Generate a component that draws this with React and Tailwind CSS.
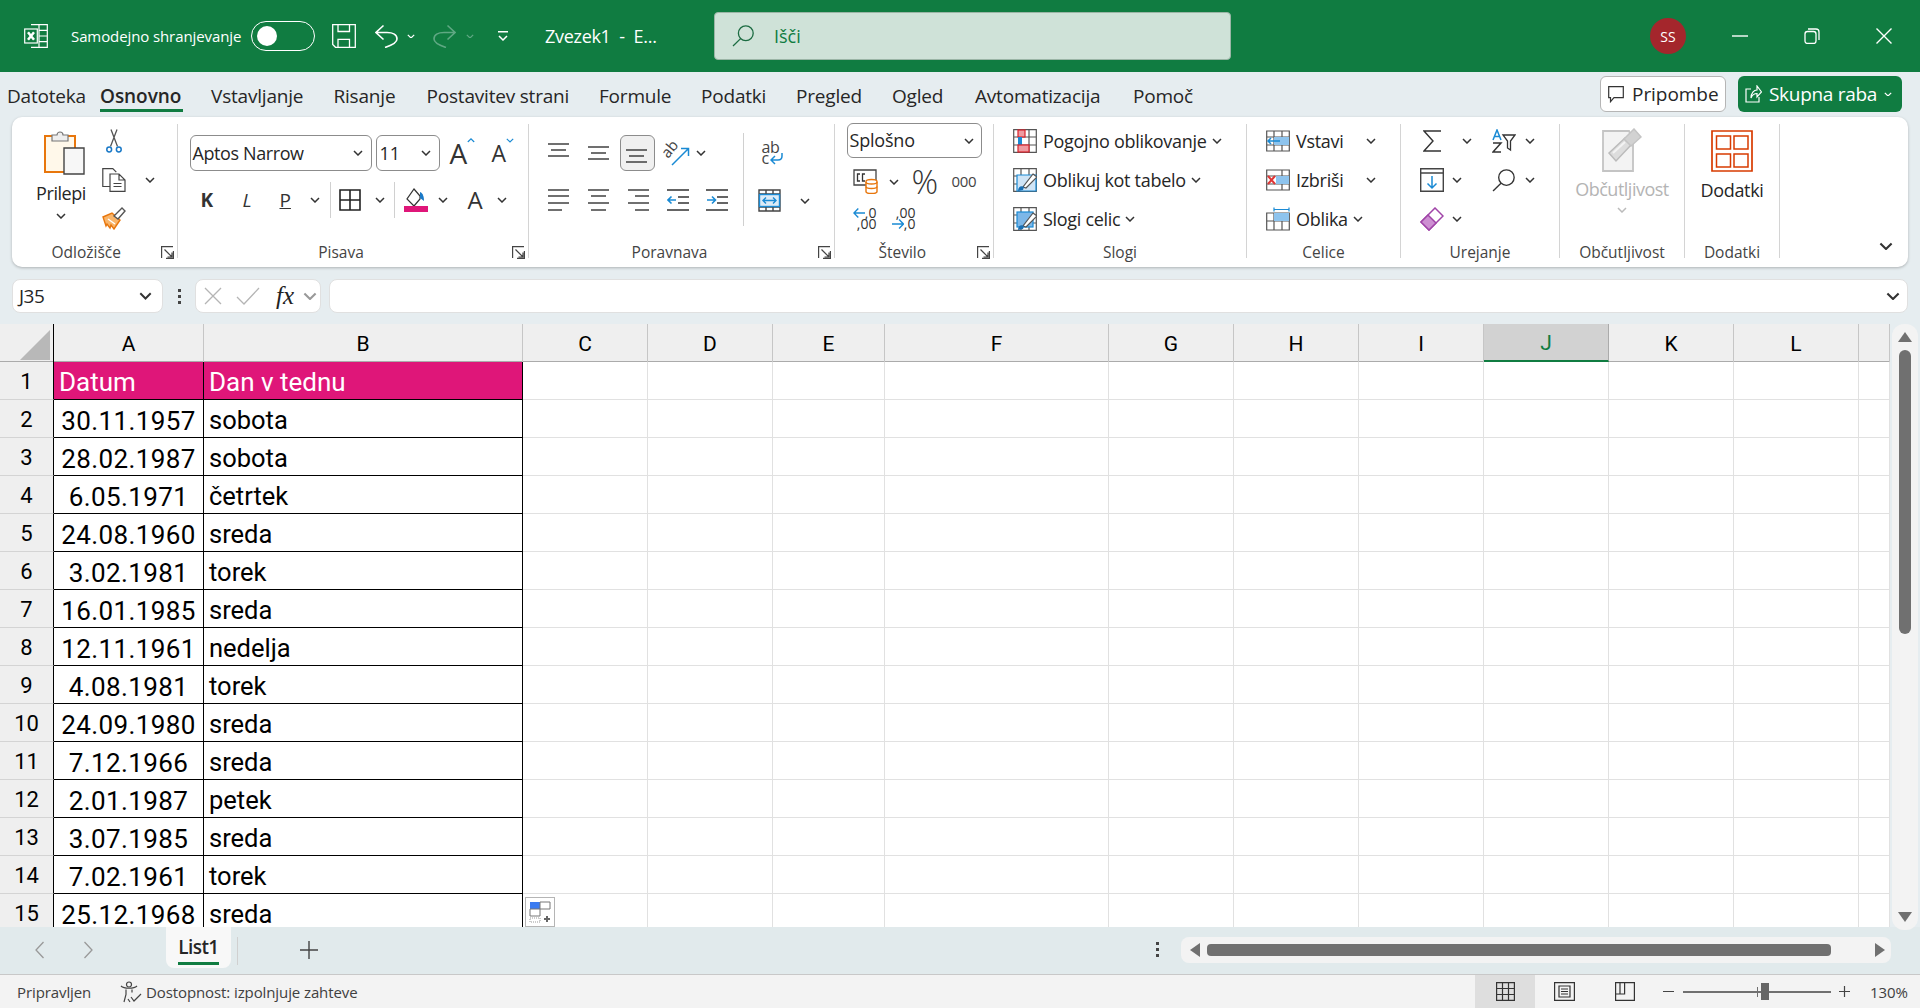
import React from "react";

const Chev = ({ className = "", color = "#333", w = 10 }) => (
  <svg viewBox="0 0 10 6" style={{ width: w }} className={`shrink-0 h-auto ${className}`} fill="none" stroke={color} strokeWidth="1.5">
    <path d="M1 1l4 4 4-4" />
  </svg>
);

const Launcher = () => (
  <svg viewBox="0 0 13 13" className="w-[13px] h-[13px]" fill="none" stroke="#444" strokeWidth="1.2">
    <path d="M.6 12V.6H12M12.4 5v7.4H5M3.5 3.5l7.5 7.5M11 6.5V11H6.5" />
  </svg>
);

const Sep = ({ className = "" }) => <div className={`w-px bg-[#d0d0d0] ${className}`} />;

const Group = ({ w, label, launcher, labelClass = "", children }) => (
  <div style={{ width: w }} className="h-[134px] flex flex-col shrink-0 border-r border-[#d4d4d4]">
    <div className="flex-1 min-h-0">{children}</div>
    <div className="h-[20px] -mb-[4px] flex items-center text-[15.5px] text-[#444] leading-[20px]">
      <span className={`flex-1 text-center ${labelClass}`}>{label}</span>
      {launcher && <span className="shrink-0 mr-[3px]"><Launcher /></span>}
    </div>
  </div>
);

// ---- title bar icons
const ExcelLogo = () => (
  <svg viewBox="0 0 24 24" className="w-6 h-6 shrink-0" fill="none" stroke="#fff" strokeWidth="1.2">
    <path d="M7 .7h16.3v22.6H7M15 .7v22.6M15 6.300h8.300M15 12h8.300M15 17.700h8.300" />
    <rect x=".7" y="5" width="12.6" height="14" fill="#107c41" />
    <path d="M4 8.200l6 7.600M10 8.200l-6 7.600" strokeWidth="2.500" />
  </svg>
);
const SaveIcon = () => (
  <svg viewBox="0 0 24 24" className="w-6 h-6" fill="none" stroke="#fff" strokeWidth="1.3">
    <path d="M.7.7h22.600v22.600H3.500L.7 20.500zM6 .7v6.800h11.500V.7M6 23.300v-8h11.500v8" />
  </svg>
);
const UndoIcon = () => (
  <svg viewBox="0 0 23 24" className="w-[23px] h-6" fill="none" stroke="#fff" strokeWidth="1.6">
    <path d="M1 8.500h11c6 0 10 2.500 10 6.500 0 3.500-6 6.500-12 8.500M8.500 1.500L1 8.500l7.500 7" />
  </svg>
);
const RedoIcon = () => (
  <svg viewBox="0 0 23 24" className="w-[23px] h-6" fill="none" stroke="#5fa883" strokeWidth="1.6">
    <path d="M22 8.500H11C5 8.500 1 11 1 15c0 3.500 6 6.500 12 8.500M14.500 1.500l7.500 7-7.500 7" />
  </svg>
);
const SearchGlass = ({ color = "#333", size = 22 }) => (
  <svg viewBox="0 0 22 22" style={{ width: size, height: size }} fill="none" stroke={color} strokeWidth="1.3">
    <circle cx="13.800" cy="8.200" r="7.400" />
    <path d="M8.600 13.600L1 21" />
  </svg>
);

// ---- clipboard
const PasteIcon = () => (
  <svg viewBox="0 0 41 45" className="w-[41px] h-[45px]" fill="none">
    <path d="M1 6h5v36H1z" fill="#fbd99a" />
    <path d="M1 6h30v36H1z" stroke="#e8760c" strokeWidth="2" fill="#fff8ea" />
    <path d="M8 5h5a3 3 0 0 1 6 0h5v6H8z" fill="#eee" stroke="#777" strokeWidth="1.200" />
    <path d="M20 18h20v26H20z" fill="#f7f7f7" stroke="#444" strokeWidth="1.400" />
  </svg>
);
const ScissorsIcon = () => (
  <svg viewBox="0 0 16 24" className="w-4 h-6" fill="none" strokeWidth="1.300">
    <path d="M4.500 17.500L11 .5M11.500 17.500L5 .5" stroke="#555" />
    <circle cx="3.200" cy="20.500" r="2.400" stroke="#1a79c7" strokeWidth="1.500" />
    <circle cx="12.800" cy="20.500" r="2.400" stroke="#1a79c7" strokeWidth="1.500" />
  </svg>
);
const CopyIcon = () => (
  <svg viewBox="0 0 24 24" className="w-6 h-6" fill="none" stroke="#444" strokeWidth="1.200">
    <path d="M8 18.500H.8V.7h10l3.500 3.500" />
    <path d="M8 6h9l6 6v11.300H8zM17 6v6h6M11.500 15.500h8M11.500 18.500h8" fill="#fff" />
  </svg>
);
const BrushIcon = () => (
  <svg viewBox="0 0 24 23" className="w-6 h-[23px]" fill="none" strokeWidth="1.400">
    <path d="M1 10l9-4 8 7-6 9-3-4-1 3-3-4-1 2z" fill="#f9b56a" stroke="#e8760c" />
    <path d="M6 12l7 5" stroke="#fff" />
    <path d="M12 9l8-8 3 3-7 8z" fill="#fff" stroke="#555" />
  </svg>
);

// ---- font
const BorderIcon = () => (
  <svg viewBox="0 0 22 22" className="w-[22px] h-[22px]" fill="none" stroke="#222" strokeWidth="1.600">
    <path d="M1 1h20v20H1zM11 1v20M1 11h20" />
  </svg>
);
const FillIcon = () => (
  <svg viewBox="0 0 24 24" className="w-6 h-6" fill="none">
    <path d="M9 1l6 7v3l-6 7-7-7z" stroke="#333" strokeWidth="1.200" transform="translate(1 0)" />
    <path d="M16 4c3 1 4 5 4 9l-4-3z" fill="#1a79c7" />
    <rect y="18" width="24" height="6" fill="#df1679" />
  </svg>
);
const Lines = ({ rows }) => (
  <svg viewBox="0 0 22 22" className="w-[22px] h-[22px]" fill="none" stroke="#333" strokeWidth="1.400">
    {rows.map((d, i) => <path key={i} d={d} />)}
  </svg>
);
const IndentIcon = ({ inc }) => (
  <svg viewBox="0 0 22 22" className="w-[22px] h-[22px]" fill="none" strokeWidth="1.400">
    <path d="M0 1h22M11 8h11M11 14h11M0 21h22" stroke="#333" />
    <path d={inc ? "M1 11h8M6 7.500l3.500 3.500L6 14.500" : "M9 11H1M4.500 7.500L1 11l3.500 3.500"} stroke="#1a8ad4" strokeWidth="1.600" />
  </svg>
);
const OrientIcon = () => (
  <svg viewBox="0 0 24 24" className="w-6 h-6 overflow-visible font-['Open_Sans',sans-serif]" fill="none">
    <path d="M8 24L24 8M17 7.500h7.500V15" stroke="#1a8ad4" strokeWidth="1.500" />
    <text x="4" y="18" transform="rotate(-50 4 18)" fontSize="15" fill="#444">ab</text>
  </svg>
);
const WrapArrow = () => (
  <svg viewBox="0 0 13 12" className="w-[13px] h-[12px] ml-[1px]" fill="none" stroke="#1a8ad4" strokeWidth="1.500">
    <path d="M12 0v3c0 3-2 4-4 4H1M5 3L1 7l4 4" />
  </svg>
);
const MergeIcon = () => (
  <svg viewBox="0 0 23 23" className="w-[23px] h-[23px]" fill="none" strokeWidth="1.400">
    <path d="M1 1h21v21H1zM1 5h21M1 18h21M8 1v4M15 1v4M8 18v4M15 18v4" stroke="#444" />
    <rect x="1.500" y="5.500" width="20" height="12" fill="#dcebf7" stroke="#1a8ad4" />
    <path d="M5 11.500h13M8 8.500l-3 3 3 3M15 8.500l3 3-3 3" stroke="#1a8ad4" />
  </svg>
);

// ---- number
const AccountIcon = () => (
  <svg viewBox="0 0 25 25" className="w-[25px] h-[25px]" fill="none">
    <path d="M1 1h22v15H1z" stroke="#444" strokeWidth="1.300" />
    <path d="M7 5H4.500v7H7M12 5H9.500v7H12" stroke="#333" strokeWidth="1.300" />
    <path d="M13 12.500a5.500 2 0 0 1 11 0v10a5.500 2 0 0 1-11 0z" fill="#fff" stroke="#e8760c" strokeWidth="1.400" />
    <path d="M13 13a5.500 2 0 0 0 11 0M13 17.500a5.500 2 0 0 0 11 0" stroke="#e8760c" strokeWidth="1.300" />
  </svg>
);
const DecArrow = ({ right }) => (
  <svg viewBox="0 0 14 12" className="w-[14px] h-[12px]" fill="none" stroke="#1a8ad4" strokeWidth="1.600">
    <path d={right ? "M0 6h13M8 1l5 5-5 5" : "M14 6H1M6 1L1 6l5 5"} />
  </svg>
);

// ---- styles and cells
const StyleGrid = ({ children }) => (
  <svg viewBox="0 0 24 24" className="w-6 h-6 shrink-0" fill="none" strokeWidth="1.200">
    <path d="M.7.7h22.600v22.600H.7zM8 .7v22.600M16 .7v22.600M.7 8h22.600M.7 16h22.600" stroke="#555" />
    {children}
  </svg>
);
const CondIcon = () => (
  <StyleGrid>
    <rect x="5" y="1" width="7" height="7" fill="#ee9ba1" stroke="#d9232e" />
    <rect x="5" y="8" width="4" height="8" fill="#1a8ad4" />
    <rect x="5" y="16" width="11" height="7" fill="#ee9ba1" stroke="#d9232e" />
  </StyleGrid>
);
const TableIcon = () => (
  <StyleGrid>
    <path d="M4 7h19v16H4z" fill="#cfe4f6" stroke="#1a8ad4" />
    <path d="M20 6l4 3-11 11-3-1z" fill="#fff" stroke="#555" />
    <path d="M5 23c0-4 3-6 6-4l-1 3z" fill="#1a6fb3" />
  </StyleGrid>
);
const CellStyleIcon = () => (
  <StyleGrid>
    <rect x="4" y="5" width="16" height="15" fill="#7db7e8" stroke="#1a8ad4" />
    <path d="M20 6l4 3-11 11-3-1z" fill="#fff" stroke="#555" />
    <path d="M5 23c0-4 3-6 6-4l-1 3z" fill="#1a6fb3" />
  </StyleGrid>
);
const InsertIcon = () => (
  <svg viewBox="0 0 24 24" className="w-6 h-6 shrink-0" fill="none" strokeWidth="1.200">
    <path d="M.7 2h22.600v20H.7zM.7 8h22.600M.7 16h22.600M8 2v20M16 2v20" stroke="#555" />
    <rect x="8" y="8" width="15" height="8" fill="#8ec4ee" />
    <path d="M14 12H2M5 9l-3 3 3 3" stroke="#1a8ad4" strokeWidth="1.500" />
  </svg>
);
const DeleteIcon = () => (
  <svg viewBox="0 0 24 24" className="w-6 h-6 shrink-0" fill="none" strokeWidth="1.200">
    <path d="M.7 2h22.600v20H.7zM.7 8h22.600M.7 16h22.600M16 2v20" stroke="#555" />
    <rect x="10" y="8" width="13" height="8" fill="#8ec4ee" />
    <path d="M2 8l7 8M9 8l-7 8" stroke="#e03636" strokeWidth="2" />
  </svg>
);
const FormatIcon = () => (
  <svg viewBox="0 0 24 24" className="w-6 h-6 shrink-0" fill="none" strokeWidth="1.200">
    <path d="M.7 6h22.600v17H.7zM8 6v17M16 6v17M.7 14h22.600" stroke="#555" />
    <rect x="8" y="6" width="15" height="8" fill="#8ec4ee" />
    <path d="M8 2.500h15M8 .5v4M23 .5v4" stroke="#1a8ad4" />
  </svg>
);

// ---- editing
const SigmaIcon = () => (
  <svg viewBox="0 0 18 22" className="w-[18px] h-[22px]" fill="none" stroke="#333" strokeWidth="1.400">
    <path d="M18 1H1l9 10-9 10h17" />
  </svg>
);
const SortIcon = () => (
  <svg viewBox="0 0 24 24" className="w-6 h-6" fill="none" strokeWidth="1.500">
    <path d="M1 11L5 1l4 10M2.500 7.500h5" stroke="#1a8ad4" />
    <path d="M1 14h8l-8 9h8" stroke="#333" />
    <path d="M11 6h12l-4.500 6v9l-3-2v-7z" stroke="#333" strokeWidth="1.300" />
  </svg>
);
const DownFillIcon = () => (
  <svg viewBox="0 0 24 24" className="w-6 h-6" fill="none" strokeWidth="1.400">
    <path d="M.7.7h22.600v22.600H.7zM.7 5h22.600" stroke="#444" />
    <path d="M12 8v12M7.500 15.500L12 20l4.500-4.500" stroke="#1a8ad4" strokeWidth="1.500" />
  </svg>
);
const EraserIcon = () => (
  <svg viewBox="0 0 24 24" className="w-6 h-6" fill="none" strokeWidth="1.500">
    <path d="M1 15L15 1l8 8L9 23z" stroke="#a044a8" fill="#fff" />
    <path d="M1 15l7-7 8 8-7 7z" fill="#cd8fd2" stroke="#a044a8" />
  </svg>
);
const SensitivityIcon = () => (
  <svg viewBox="0 0 40 44" className="w-10 h-11" fill="none">
    <path d="M1 3h26l4 10v30H1z" fill="#f3f3f3" stroke="#c4c4c4" strokeWidth="1.800" />
    <path d="M7 25L23 10l6 7-15 16z" fill="#ddd" stroke="#bbb" strokeWidth="1.500" />
    <path d="M11 25l12-11" stroke="#f3f3f3" strokeWidth="2" />
    <path d="M22 11l10-10 7 8-10 9z" fill="#d2d2d2" stroke="#c4c4c4" strokeWidth="1.500" />
  </svg>
);
const AddinsIcon = () => (
  <svg viewBox="0 0 42 42" className="w-[42px] h-[42px]" fill="none" stroke="#d83b01" strokeWidth="1.500">
    <path d="M1 1h40v40H1z" strokeWidth="1.700" />
    <path d="M5.500 6h14v13h-14zM23 6h14v13H23zM5.500 24h14v13h-14zM23 24h14v13H23z" />
  </svg>
);

const ALIGN_TOP = ["M0 2h21", "M3 8h15", "M0 14h21"];
const ALIGN_MID = ["M0 5h21", "M3 11h15", "M0 17h21"];
const ALIGN_LEFT = ["M0 1h21", "M0 7h21", "M0 14h21", "M0 21h14"];
const ALIGN_CENTER = ["M0 1h21", "M3 7h15", "M0 14h21", "M3 21h15"];
const ALIGN_RIGHT = ["M0 1h21", "M7 7h14", "M0 14h21", "M7 21h14"];

const TextRow = ({ icon, label, children, className = "" }) => (
  <div className={`h-6 flex items-center ${className}`}>
    {icon}
    <span className="ml-[6px] text-[18px] text-[#262626] tracking-[-0.3px] whitespace-nowrap">{label}</span>
    {children}
  </div>
);

const Ribbon = () => (
  <div className="mx-[12px] h-[150px] bg-white rounded-[10px] shadow-[0_1px_3px_rgba(0,0,0,0.25)] pt-[7px] flex text-[#262626] shrink-0">
    <Group w={165.5} label="Odložišče" launcher>
      <div className="flex">
        <div className="w-[82px] ml-[8px] flex flex-col items-center pt-[6px]">
          <div className="ml-[6px]"><PasteIcon /></div>
          <div className="mt-[6px] h-6 text-[18px] leading-6 tracking-[-0.45px]">Prilepi</div>
          <Chev className="mt-[8px]" />
        </div>
        <div className="w-[60px] pt-[5px]">
          <div className="w-6 h-6 flex justify-center"><ScissorsIcon /></div>
          <div className="mt-[15px] flex items-center"><CopyIcon /><Chev className="ml-[19px]" /></div>
          <div className="mt-[15px]"><BrushIcon /></div>
        </div>
      </div>
    </Group>

    <Group w={351} label="Pisava" launcher labelClass="pr-[7px]">
      <div className="pl-[12px] pt-[11px] flex h-[47px]">
        <div className="w-[182px] h-9 rounded-[6px] border border-[#8c8c8c] flex items-center justify-between pl-[2px] pr-[8px] text-[18px] tracking-[-0.4px]">
          Aptos Narrow<Chev />
        </div>
        <div className="w-[64px] ml-[4px] h-9 rounded-[6px] border border-[#8c8c8c] flex items-center justify-between pl-[3px] pr-[8px] text-[18px]">
          11<Chev />
        </div>
        <div className="ml-[10px] w-[24px] h-9 text-[28px] leading-9 text-[#333] relative">A
          <span className="absolute left-[17px] top-[3px]"><Chev color="#1a8ad4" w={8} className="rotate-180" /></span>
        </div>
        <div className="ml-[18px] w-[20px] h-9 text-[23px] leading-9 text-[#333] relative">A
          <span className="absolute left-[14px] top-[3px]"><Chev color="#1a8ad4" w={8} /></span>
        </div>
      </div>
      <div className="mt-[18px] pl-[23px] flex items-center h-[22px]">
        <span className="w-[13px] text-[19px] font-bold text-[#333]">K</span>
        <span className="ml-[29px] w-[9px] text-[19px] italic text-[#333]">L</span>
        <span className="ml-[28px] w-[13px] text-[19px] text-[#333] underline">P</span>
        <Chev className="ml-[17px]" />
        <Sep className="ml-[10px] h-[36px]" />
        <div className="ml-[8px]"><BorderIcon /></div>
        <Chev className="ml-[14px]" />
        <Sep className="ml-[9px] h-[36px]" />
        <div className="ml-[9px]"><FillIcon /></div>
        <Chev className="ml-[10px]" />
        <span className="ml-[20px] w-[15px] text-[24px] text-[#333] leading-[22px]">A</span>
        <Chev className="ml-[14px]" />
      </div>
    </Group>

    <Group w={306} label="Poravnava" launcher labelClass="pr-[7px]">
      <div className="flex">
        <div className="w-[214px] pl-[19px] pt-[11px]">
          <div className="flex items-center h-9">
            <Lines rows={ALIGN_TOP} />
            <div className="ml-[18px]"><Lines rows={ALIGN_MID} /></div>
            <div className="ml-[10px] w-[35px] h-9 rounded-[6px] border border-[#8c8c8c] bg-[#f0f0f0] flex items-center justify-center">
              <Lines rows={["M0 8h21", "M3 14h15", "M0 20h21"]} />
            </div>
            <div className="ml-[9px]"><OrientIcon /></div>
            <Chev className="ml-[8px]" />
          </div>
          <div className="flex items-center mt-[18px] h-[22px]">
            <Lines rows={ALIGN_LEFT} />
            <div className="ml-[18px]"><Lines rows={ALIGN_CENTER} /></div>
            <div className="ml-[18px]"><Lines rows={ALIGN_RIGHT} /></div>
            <div className="ml-[17px]"><IndentIcon /></div>
            <div className="ml-[17px]"><IndentIcon inc /></div>
          </div>
        </div>
        <Sep className="h-[93px] mt-[9px]" />
        <div className="pl-[14px] pt-[18px]">
          <div className="h-[24px] ml-[4px] text-[16px] text-[#444] tracking-[-0.3px]">
            <div className="h-[11px] leading-[11px]">ab</div>
            <div className="h-[11px] leading-[11px] flex items-center">c<WrapArrow /></div>
          </div>
          <div className="mt-[23px] flex items-center"><MergeIcon /><Chev className="ml-[19px]" /></div>
        </div>
      </div>
    </Group>

    <Group w={159.5} label="Število" launcher labelClass="pr-[7px]">
      <div className="pl-[12px]">
        <div className="w-[135px] h-[35px] -mt-[1px] rounded-[6px] border border-[#8c8c8c] flex items-center justify-between pl-[2px] pr-[7px] text-[18px] tracking-[-0.2px]">
          Splošno<Chev />
        </div>
        <div className="flex items-center mt-[11px] ml-[6px] h-[25px]">
          <AccountIcon />
          <Chev className="ml-[11px]" />
          <span className="ml-[13px] w-[26px] text-[33px] text-[#333] leading-[25px] font-light">%</span>
          <span className="ml-[14px] text-[15px] text-[#444] tracking-[-0.3px]">000</span>
        </div>
        <div className="flex mt-[13px] ml-[6px] text-[14px] leading-[11px] text-[#333]">
          <div className="w-[24px]">
            <div className="flex items-center h-[11px]"><DecArrow /><span>,0</span></div>
            <div className="h-[11px] text-right">,00</div>
          </div>
          <div className="w-[24px] ml-[15px]">
            <div className="h-[11px] text-right">,00</div>
            <div className="flex items-center h-[11px]"><DecArrow right /><span>,0</span></div>
          </div>
        </div>
      </div>
    </Group>

    <Group w={253} label="Slogi">
      <div className="pl-[19px] pt-[5px]">
        <TextRow icon={<CondIcon />} label="Pogojno oblikovanje"><Chev className="ml-[5px]" /></TextRow>
        <TextRow className="mt-[15px]" icon={<TableIcon />} label="Oblikuj kot tabelo"><Chev className="ml-[5px]" /></TextRow>
        <TextRow className="mt-[15px]" icon={<CellStyleIcon />} label="Slogi celic"><Chev className="ml-[5px]" /></TextRow>
      </div>
    </Group>

    <Group w={154} label="Celice">
      <div className="pl-[19px] pt-[5px]">
        <TextRow icon={<InsertIcon />} label="Vstavi"><Chev className="ml-auto mr-[24px]" /></TextRow>
        <TextRow className="mt-[15px]" icon={<DeleteIcon />} label="Izbriši"><Chev className="ml-auto mr-[24px]" /></TextRow>
        <TextRow className="mt-[15px]" icon={<FormatIcon />} label="Oblika"><Chev className="ml-[5px]" /></TextRow>
      </div>
    </Group>

    <Group w={159} label="Urejanje">
      <div className="pl-[19px] pt-[5px] grid grid-cols-[72px_60px] gap-y-[15px]">
        <div className="h-6 flex items-center"><div className="ml-[3px]"><SigmaIcon /></div><Chev className="ml-[21px]" /></div>
        <div className="h-6 flex items-center"><SortIcon /><Chev className="ml-[9px]" /></div>
        <div className="h-6 flex items-center"><DownFillIcon /><Chev className="ml-[8px]" /></div>
        <div className="h-6 flex items-center"><SearchGlass size={23} /><Chev className="ml-[10px]" /></div>
        <div className="h-6 flex items-center"><EraserIcon /><Chev className="ml-[8px]" /></div>
      </div>
    </Group>

    <Group w={125} label="Občutljivost">
      <div className="flex flex-col items-center pt-[4px]">
        <SensitivityIcon />
        <div className="mt-[5px] h-6 text-[18px] leading-6 tracking-[-0.5px] text-[#b4b4b4]">Občutljivost</div>
        <Chev className="mt-[6px]" color="#bbb" />
      </div>
    </Group>

    <Group w={95} label="Dodatki">
      <div className="flex flex-col items-center pt-[6px]">
        <AddinsIcon />
        <div className="mt-[6px] h-6 text-[18px] leading-6 tracking-[-0.3px]">Dodatki</div>
      </div>
    </Group>

    <div className="flex-1 flex justify-end items-end pr-[15px] pb-[8px] h-[134px]">
      <Chev w={14} color="#333" />
    </div>
  </div>
);

const TitleBar = () => (
  <div className="h-[72px] bg-[#107c41] flex items-center text-white shrink-0">
    <div className="ml-[24px]"><ExcelLogo /></div>
    <span className="ml-[23px] w-[180px] text-[15px] tracking-[-0.1px] whitespace-nowrap">Samodejno shranjevanje</span>
    <div className="w-[64px] h-[30px] rounded-full border-[1.5px] border-white flex items-center pl-[5px]">
      <div className="w-[20px] h-[20px] rounded-full bg-white" />
    </div>
    <div className="ml-[17px]"><SaveIcon /></div>
    <div className="ml-[19px]"><UndoIcon /></div>
    <Chev className="ml-[9px]" color="#fff" w={8} />
    <div className="ml-[18px]"><RedoIcon /></div>
    <Chev className="ml-[10px]" color="#5fa883" w={8} />
    <svg viewBox="0 0 10 10" className="ml-[24px] w-[10px] h-[10px]" fill="none" stroke="#fff" strokeWidth="1.500">
      <path d="M0 .8h10M1 5l4 4 4-4" />
    </svg>
    <span className="ml-[37px] w-[169px] text-[18px] tracking-[-0.3px] whitespace-pre">Zvezek1  -  E...</span>
    <div className="w-[517px] h-[48px] rounded-[4px] border border-[#9bb5a6] bg-[#cfe2d8] flex items-center pl-[17px] text-[#107c41]">
      <SearchGlass color="#1b6b41" />
      <span className="ml-[20px] text-[18px]">Išči</span>
    </div>
    <div className="ml-[419px] w-[36px] h-[36px] rounded-full bg-[#a4262c] flex items-center justify-center text-[14px]">SS</div>
    <svg viewBox="0 0 16 2" className="ml-[46px] w-[16px] h-[2px]"><path d="M0 1h16" stroke="#fff" strokeWidth="1.400" /></svg>
    <svg viewBox="0 0 16 16" className="ml-[56px] w-[16px] h-[16px]" fill="none" stroke="#fff" strokeWidth="1.300">
      <rect x="1" y="3.500" width="11" height="12" rx="2.500" />
      <path d="M4 1h8a3 3 0 0 1 3 3v8" />
    </svg>
    <svg viewBox="0 0 16 16" className="ml-[56px] w-[16px] h-[16px]" fill="none" stroke="#fff" strokeWidth="1.400">
      <path d="M.5.5l15 15M15.500.5l-15 15" />
    </svg>
  </div>
);

const TABS = [
  ["Datoteka", "w-[93px]"],
  ["Osnovno", "w-[111px]"],
  ["Vstavljanje", "w-[122.5px]"],
  ["Risanje", "w-[93px]"],
  ["Postavitev strani", "w-[172.5px]"],
  ["Formule", "w-[102px]"],
  ["Podatki", "w-[95px]"],
  ["Pregled", "w-[96px]"],
  ["Ogled", "w-[83px]"],
  ["Avtomatizacija", "w-[158px]"],
  ["Pomoč", "w-[60px]"],
];

const TabRow = () => (
  <div className="h-[45px] pl-[7px] pt-[4px] flex text-[#262626] shrink-0">
    {TABS.map(([t, w]) => (
      <div key={t} className={`${w} h-[36px]`}>
        {t === "Osnovno" ? (
          <span className="inline-block h-[36px] pt-[7px] w-[83px] leading-[26px] text-[19px] tracking-[-0.05px] font-semibold border-b-[3px] border-[#107c41] whitespace-nowrap">{t}</span>
        ) : (
          <span className="inline-block h-[36px] pt-[7px] leading-[26px] text-[19px] tracking-[-0.2px] whitespace-nowrap">{t}</span>
        )}
      </div>
    ))}
    <div className="ml-auto flex">
      <div className="w-[126px] h-[36px] rounded-[6px] bg-white border border-[#b5b5b5] flex items-center pl-[7px] text-[19px] tracking-[-0.05px]">
        <svg viewBox="0 0 16 17" className="w-[16px] h-[17px] mr-[8px]" fill="none" stroke="#333" strokeWidth="1.200"><path d="M.7.7h14.600v11H6l-3.500 4v-4H.7z" /></svg>
        Pripombe
      </div>
      <div className="ml-[12px] mr-[18px] w-[164px] h-[36px] rounded-[6px] bg-[#107c41] text-white flex items-center pl-[7px] text-[19px] tracking-[-0.3px]">
        <svg viewBox="0 0 17 18" className="w-[17px] h-[18px] mr-[7px]" fill="none" stroke="#fff" strokeWidth="1.200"><path d="M6 4H1v13h13v-5M6 13c0-5 3-8 6-8V1l4.500 6L12 12V8.500c-3 0-5 2-6 4.500z" /></svg>
        Skupna raba
        <Chev className="ml-[7px]" color="#fff" w={8} />
      </div>
    </div>
  </div>
);

const FormulaBar = () => (
  <div className="h-[57px] pt-[12px] pl-[12px] flex shrink-0">
    <div className="w-[151px] h-[34px] rounded-[8px] bg-white border border-[#e0e0e0] flex items-center pl-[6px] pr-[10px] justify-between text-[19px] tracking-[-0.5px] text-[#262626]">
      J35<Chev w={13} />
    </div>
    <div className="w-[32px] h-[34px] flex flex-col items-center justify-center gap-[3px]">
      <div className="w-[3px] h-[3px] bg-[#444]" />
      <div className="w-[3px] h-[3px] bg-[#444]" />
      <div className="w-[3px] h-[3px] bg-[#444]" />
    </div>
    <div className="w-[126px] h-[34px] rounded-[8px] bg-white border border-[#e0e0e0] flex items-center pl-[8px]">
      <svg viewBox="0 0 18 18" className="w-[18px] h-[18px]" fill="none" stroke="#b5b5b5" strokeWidth="1.300"><path d="M1 1l16 16M17 1L1 17" /></svg>
      <svg viewBox="0 0 24 18" className="ml-[14px] w-[24px] h-[18px]" fill="none" stroke="#b5b5b5" strokeWidth="1.300"><path d="M1 10l7 7L23 1" /></svg>
      <span className="ml-[16px] w-[24px] font-['Liberation_Serif',serif] italic text-[25px] leading-[30px] text-[#222]">fx</span>
      <Chev className="ml-[3px]" w={14} color="#999" />
    </div>
    <div className="ml-[8px] w-[1579px] h-[34px] rounded-[8px] bg-white border border-[#e0e0e0] flex items-center justify-end pr-[7px]">
      <Chev w={14} />
    </div>
  </div>
);

const COLS = ["A", "B", "C", "D", "E", "F", "G", "H", "I", "J", "K", "L", ""];
const GRID = "grid grid-cols-[54px_150px_319px_125px_125px_112px_224px_125px_125px_125px_125px_125px_125px_31px] leading-none";

const DATA = [
  ["Datum", "Dan v tednu"],
  ["30.11.1957", "sobota"],
  ["28.02.1987", "sobota"],
  ["6.05.1971", "četrtek"],
  ["24.08.1960", "sreda"],
  ["3.02.1981", "torek"],
  ["16.01.1985", "sreda"],
  ["12.11.1961", "nedelja"],
  ["4.08.1981", "torek"],
  ["24.09.1980", "sreda"],
  ["7.12.1966", "sreda"],
  ["2.01.1987", "petek"],
  ["3.07.1985", "sreda"],
  ["7.02.1961", "torek"],
  ["25.12.1968", "sreda"],
];

const Sheet = () => (
  <div className="flex-1 min-h-0 flex font-['Roboto',sans-serif]">
    <div className="w-[1890px] overflow-hidden bg-white">
      <div className={`${GRID} h-[37.5px] grid-rows-[37.5px] bg-[#efefef] border-b border-[#ababab]`}>
        <div className="relative border-r border-black">
          <div className="absolute right-[3px] bottom-[2px] w-0 h-0 border-l-[30px] border-l-transparent border-b-[30px] border-b-[#b8b8b8]" />
        </div>
        {COLS.map((c, i) => (
          <div key={i} className={`flex items-center justify-center pt-[4px] text-[21px] border-r ${c === "J" ? "bg-[#d2d2d2] text-[#107c41] border-[#ababab] border-b-2 border-b-[#107c41]" : "text-black border-[#c6c6c6]"}`}>{c}</div>
        ))}
      </div>
      {DATA.map(([d, w], r) => (
        <div key={r} className={`${GRID} h-[38px] grid-rows-[38px]`}>
          <div className="bg-[#efefef] border-r border-b border-r-black border-b-[#d4d4d4] flex items-center justify-center pt-[4px] text-[22px] text-black">{r + 1}</div>
          {r === 0 ? (
            <>
              <div className="bg-[#df1679] text-white border-r border-b border-black flex items-center pl-[5px] pt-[4px] text-[26px]">{d}</div>
              <div className="bg-[#df1679] text-white border-r border-b border-black flex items-center pl-[5px] pt-[4px] text-[26px]">{w}</div>
            </>
          ) : (
            <>
              <div className="border-r border-b border-black flex items-center justify-center pt-[5px] text-[26px] tracking-[0.4px] text-black">{d}</div>
              <div className="border-r border-b border-black flex items-center pl-[5px] pt-[5px] text-[25.5px] text-black">{w}</div>
            </>
          )}
          {COLS.slice(2).map((c, i) => (
            <div key={i} className="border-r border-b border-[#e1e1e1] relative">
              {r === 14 && i === 0 && (
                <div className="absolute left-[2px] top-[3px] w-[30px] h-[30px] bg-white border border-[#b5b5b5]">
                  <svg viewBox="0 0 28 28" className="w-full h-full" fill="none" strokeWidth="1">
                    <rect x="4" y="4" width="10" height="7" fill="#3b7bf0" />
                    <path d="M14 4h10v7H14zM4 11h10v7H4z" stroke="#777" />
                    <path d="M4 20h10v4H4z" stroke="#999" strokeDasharray="1 1" />
                    <path d="M21 18v6M18 21h6" stroke="#666" strokeWidth="2" />
                  </svg>
                </div>
              )}
            </div>
          ))}
        </div>
      ))}
    </div>
    <div className="w-[30px] relative z-10 -mb-[3px]">
      <div className="ml-[2px] w-[26px] h-full rounded-[12px] bg-[#f3f3f3] flex flex-col items-center pt-[8px] pb-[8px]">
        <div className="w-0 h-0 border-x-[7px] border-x-transparent border-b-[10px] border-b-[#707070]" />
        <div className="mt-[8px] w-[12px] h-[284px] rounded-full bg-[#707070]" />
        <div className="mt-auto w-0 h-0 border-x-[7px] border-x-transparent border-t-[10px] border-t-[#707070]" />
      </div>
    </div>
  </div>
);

const SheetTabs = () => (
  <div className="h-[48px] bg-[#e1eaec] flex shrink-0 border-b border-[#c8c8c8]">
    <svg viewBox="0 0 9 18" className="ml-[35px] mt-[14px] w-[9px] h-[18px]" fill="none" stroke="#999" strokeWidth="1.300"><path d="M8.500 1L1 9l7.500 8" /></svg>
    <svg viewBox="0 0 9 18" className="ml-[40px] mt-[14px] w-[9px] h-[18px]" fill="none" stroke="#999" strokeWidth="1.300"><path d="M.5 1L8 9l-7.500 8" /></svg>
    <div className="ml-[73px] w-[65px] h-[41px] bg-[#f8f8f8] rounded-b-[8px] flex flex-col items-center pt-[7px]">
      <span className="text-[19px] leading-[26px] font-semibold tracking-[-0.6px] text-[#262626]">List1</span>
      <div className="mt-[2px] w-[41px] h-[3px] bg-[#107c41]" />
    </div>
    <Sep className="ml-[6px] mt-[10px] h-[28px] bg-[#c5c5c5]" />
    <svg viewBox="0 0 18 18" className="ml-[62px] mt-[14px] w-[18px] h-[18px]" fill="none" stroke="#444" strokeWidth="1.400"><path d="M9 0v18M0 9h18" /></svg>
    <div className="ml-[838px] mt-[15px] w-[3px] flex flex-col gap-[3px]">
      <div className="w-[3px] h-[3px] bg-[#444]" />
      <div className="w-[3px] h-[3px] bg-[#444]" />
      <div className="w-[3px] h-[3px] bg-[#444]" />
    </div>
    <div className="ml-[22px] mt-[10px] w-[710px] h-[26px] rounded-[8px] bg-[#f3f3f3] flex items-center pl-[9px]">
      <div className="w-0 h-0 border-y-[7px] border-y-transparent border-r-[10px] border-r-[#707070]" />
      <div className="ml-[7px] w-[624px] h-[12px] rounded-[4px] bg-[#707070]" />
      <div className="ml-[44px] w-0 h-0 border-y-[7px] border-y-transparent border-l-[10px] border-l-[#707070]" />
    </div>
  </div>
);

const StatusBar = () => (
  <div className="h-[33px] bg-[#f3f3f3] flex items-center text-[15px] tracking-[-0.1px] text-[#404040] shrink-0">
    <span className="ml-[17px] w-[103px] pt-[1px]">Pripravljen</span>
    <svg viewBox="0 0 22 22" className="w-[22px] h-[22px]" fill="none" stroke="#444" strokeWidth="1.200">
      <circle cx="9" cy="3.500" r="2.500" />
      <path d="M1 5c3 3 13 3 16 0M6 8.500v5l-2 7.500M12 8.500v3M8 18l2 3M11 16l3 4 7-7" />
    </svg>
    <span className="ml-[4px] w-[1329px] pt-[1px] whitespace-nowrap">Dostopnost: izpolnjuje zahteve</span>
    <div className="w-[60px] h-full bg-[#dedede] flex items-center justify-center">
      <svg viewBox="0 0 19 19" className="w-[19px] h-[19px]" fill="none" stroke="#333" strokeWidth="1.200"><path d="M.6.6h17.800v17.800H.6zM6.500.6v17.800M12.500.6v17.800M.6 6.500h17.800M.6 12.500h17.800" /></svg>
    </div>
    <svg viewBox="0 0 21 19" className="ml-[19px] w-[21px] h-[19px]" fill="none" stroke="#333" strokeWidth="1.200"><path d="M.6.6h19.800v17.800H.6zM5 4h11v11H5zM7 7h7M7 9.500h7M7 12h7" /></svg>
    <svg viewBox="0 0 20 19" className="ml-[40px] w-[20px] h-[19px]" fill="none" stroke="#333" strokeWidth="1.200"><path d="M.6.6h18.800v17.800H.6zM.6 12h9V.6M5 .6V12" /></svg>
    <span className="ml-[28px] w-[11px] h-[1.5px] bg-[#444]" />
    <div className="ml-[9px] w-[148px] h-[2px] bg-[#707070] flex items-center">
      <div className="ml-[74px] w-px h-[10px] bg-[#707070]" />
      <div className="ml-[3px] w-[8px] h-[17px] bg-[#666]" />
    </div>
    <svg viewBox="0 0 11 11" className="ml-[8px] w-[11px] h-[11px]" fill="none" stroke="#444" strokeWidth="1.200"><path d="M5.500 0v11M0 5.500h11" /></svg>
    <span className="ml-[20px] pt-[1px] whitespace-nowrap">130%</span>
  </div>
);

export default function App() {
  return (
    <div className="w-[1920px] h-[1008px] overflow-hidden flex flex-col bg-[#e6edf0] font-['Open_Sans','Noto_Sans',sans-serif]">
      <TitleBar />
      <TabRow />
      <Ribbon />
      <FormulaBar />
      <Sheet />
      <SheetTabs />
      <StatusBar />
    </div>
  );
}
